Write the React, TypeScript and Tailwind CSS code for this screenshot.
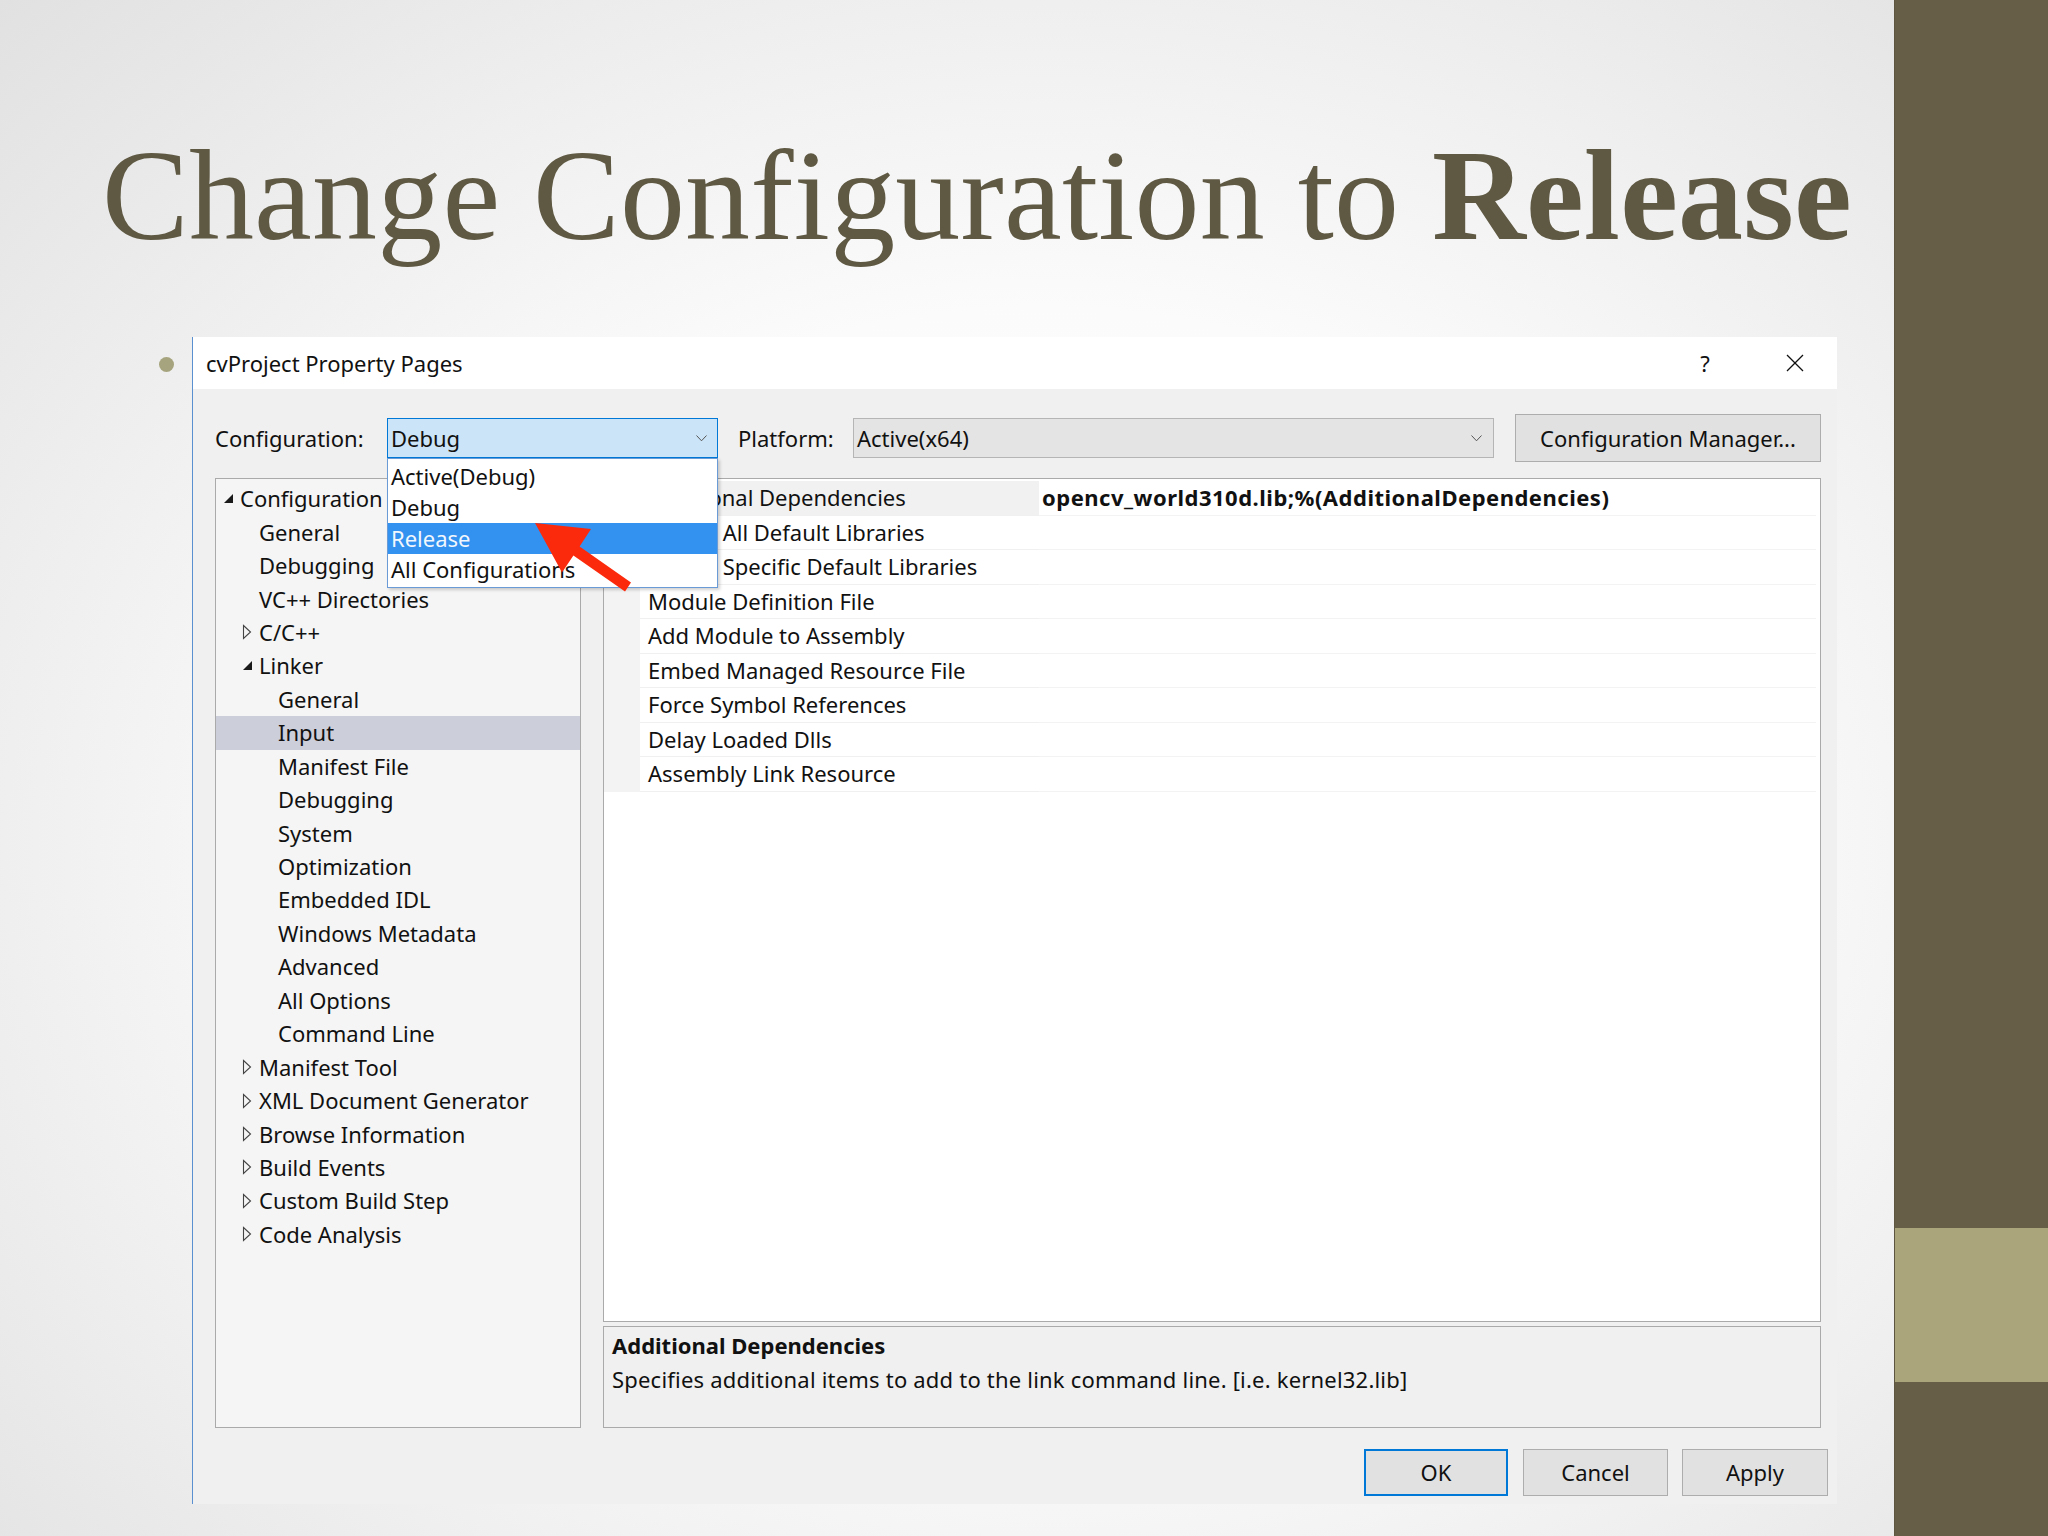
import React from "react";

type TreeItem = { label: string; level: 0 | 1 | 2; state?: "open" | "closed"; selected?: boolean };

const tree: TreeItem[] = [
  { label: "Configuration Properties", level: 0, state: "open" },
  { label: "General", level: 1 },
  { label: "Debugging", level: 1 },
  { label: "VC++ Directories", level: 1 },
  { label: "C/C++", level: 1, state: "closed" },
  { label: "Linker", level: 1, state: "open" },
  { label: "General", level: 2 },
  { label: "Input", level: 2, selected: true },
  { label: "Manifest File", level: 2 },
  { label: "Debugging", level: 2 },
  { label: "System", level: 2 },
  { label: "Optimization", level: 2 },
  { label: "Embedded IDL", level: 2 },
  { label: "Windows Metadata", level: 2 },
  { label: "Advanced", level: 2 },
  { label: "All Options", level: 2 },
  { label: "Command Line", level: 2 },
  { label: "Manifest Tool", level: 1, state: "closed" },
  { label: "XML Document Generator", level: 1, state: "closed" },
  { label: "Browse Information", level: 1, state: "closed" },
  { label: "Build Events", level: 1, state: "closed" },
  { label: "Custom Build Step", level: 1, state: "closed" },
  { label: "Code Analysis", level: 1, state: "closed" },
];

const levelPad: Record<number, string> = {
  0: "pl-[7px]",
  1: "pl-[26px]",
  2: "pl-[45px]",
};

const props = [
  "Additional Dependencies",
  "Ignore All Default Libraries",
  "Ignore Specific Default Libraries",
  "Module Definition File",
  "Add Module to Assembly",
  "Embed Managed Resource File",
  "Force Symbol References",
  "Delay Loaded Dlls",
  "Assembly Link Resource",
];

function Chevron() {
  return (
    <svg width="11" height="7" viewBox="0 0 11 7">
      <polyline points="0.5,0.5 5.5,5.8 10.5,0.5" fill="none" stroke="#555" strokeWidth="1" />
    </svg>
  );
}

function OpenTri() {
  return (
    <svg width="11" height="11" viewBox="0 0 11 11">
      <polygon points="10,1 10,10 1,10" fill="#1a1a1a" />
    </svg>
  );
}

function ClosedTri() {
  return (
    <svg width="10" height="16" viewBox="0 0 10 16">
      <polygon points="1.5,1.5 8.5,8 1.5,14.5" fill="none" stroke="#444" strokeWidth="1.1" />
    </svg>
  );
}

export default function App() {
  return (
    <div className="relative w-[2048px] h-[1536px] overflow-hidden flex">
      {/* slide area */}
      <div className="w-[1894px] h-full flex flex-col bg-[radial-gradient(ellipse_at_55%_55%,#ffffff_0%,#fbfbfb_45%,#e1e1e1_100%)]">
        <div className="h-[337px] pl-[102px] pt-[130px]">
          <div className="font-['Liberation_Serif',serif] text-[130px] leading-[130px] text-[#5f5943] whitespace-nowrap tracking-[0.2px]">
            Change Configuration to <span className="font-bold">Release</span>
          </div>
        </div>

        <div className="flex items-start ml-[159px]">
          <div className="w-[15px] h-[15px] mt-[20px] mr-[18px] rounded-full bg-[#a6a47e]" />

          {/* dialog */}
          <div className="w-[1645px] border-l border-[#5a8fd0] font-['Noto_Sans',sans-serif] text-[22px] text-[#111]">
            <div className="h-[52px] bg-white flex items-center pl-[13px] pr-[33px]">
              <span>cvProject Property Pages</span>
              <div className="ml-auto flex items-center">
                <span className="w-[20px] text-center">?</span>
                <svg className="ml-[71px]" width="18" height="18" viewBox="0 0 18 18">
                  <line x1="1" y1="1" x2="17" y2="17" stroke="#111" strokeWidth="1.3" />
                  <line x1="17" y1="1" x2="1" y2="17" stroke="#111" strokeWidth="1.3" />
                </svg>
              </div>
            </div>

            <div className="h-[1115px] bg-[#f0f0f0] flex flex-col">
              {/* config row */}
              <div className="pt-[25px] pl-[22px] flex items-center h-[73px]">
                <div className="w-[172px]">Configuration:</div>
                <div className="relative w-[331px] h-[40px] border border-[#0078d7] bg-[#cce4f7] flex items-center justify-between pl-[3px] pr-[10px]">
                  <span>Debug</span>
                  <Chevron />
                  <div className="absolute left-[-1px] top-[39px] w-[331px] border border-[#6b9bd6] bg-white py-[2px] shadow-[2px_2px_3px_rgba(0,0,0,0.18)] z-10">
                    <div className="h-[31px] leading-[31px] pl-[3px]">Active(Debug)</div>
                    <div className="h-[31px] leading-[31px] pl-[3px]">Debug</div>
                    <div className="h-[31px] leading-[31px] pl-[3px] bg-[#3391ef] text-[#f2f7fd]">Release</div>
                    <div className="h-[31px] leading-[31px] pl-[3px]">All Configurations</div>
                  </div>
                </div>
                <div className="ml-[20px] w-[115px]">Platform:</div>
                <div className="w-[641px] h-[40px] border border-[#b5b5b5] bg-[#e4e4e4] flex items-center justify-between pl-[3px] pr-[11px]">
                  <span>Active(x64)</span>
                  <Chevron />
                </div>
                <div className="ml-[21px] w-[306px] h-[48px] border border-[#adadad] bg-[#e1e1e1] flex items-center justify-center">
                  Configuration Manager...
                </div>
              </div>

              {/* main area */}
              <div className="mt-[16px] pl-[22px] flex h-[950px]">
                <div className="w-[366px] h-[950px] border border-[#aaaaaa] bg-[#f5f5f5] pt-[3px] overflow-hidden">
                  {tree.map((t, i) => (
                    <div
                      key={i}
                      className={`flex items-center h-[33.45px] whitespace-nowrap ${levelPad[t.level]} ${t.selected ? "bg-[#ccced9]" : ""}`}
                    >
                      <div className="w-[17px] flex items-center">
                        {t.state === "open" ? <OpenTri /> : t.state === "closed" ? <ClosedTri /> : null}
                      </div>
                      <span>{t.label}</span>
                    </div>
                  ))}
                </div>

                <div className="ml-[22px] w-[1218px] flex flex-col">
                  <div className="h-[844px] border border-[#aaaaaa] bg-white pt-[2px] pr-[4px]">
                    {props.map((p, i) => (
                      <div key={i} className="flex h-[34.5px]">
                        <div className="w-[36px] bg-[#f3f3f3]" />
                        <div
                          className={`w-[399px] pl-[8px] flex items-center whitespace-nowrap border-b border-[#f0f0f0] ${i === 0 ? "bg-[#f1f1f1]" : ""}`}
                        >
                          {p}
                        </div>
                        <div className="flex-1 pl-[3px] flex items-center whitespace-nowrap border-b border-[#f3f3f3] font-bold tracking-[0.5px]">
                          {i === 0 ? "opencv_world310d.lib;%(AdditionalDependencies)" : ""}
                        </div>
                      </div>
                    ))}
                  </div>
                  <div className="mt-[4px] h-[102px] border border-[#aaaaaa] bg-[#f0f0f0] pl-[8px] pt-[1px] leading-[34px]">
                    <div className="font-bold">Additional Dependencies</div>
                    <div className="tracking-[0.2px]">Specifies additional items to add to the link command line. [i.e. kernel32.lib]</div>
                  </div>
                </div>
              </div>

              {/* buttons */}
              <div className="mt-[21px] flex justify-end pr-[9px]">
                <div className="w-[144px] h-[47px] border-2 border-[#0078d7] bg-[#e1e1e1] flex items-center justify-center">OK</div>
                <div className="ml-[15px] w-[145px] h-[47px] border border-[#adadad] bg-[#e1e1e1] flex items-center justify-center">Cancel</div>
                <div className="ml-[14px] w-[146px] h-[47px] border border-[#adadad] bg-[#e1e1e1] flex items-center justify-center">Apply</div>
              </div>
            </div>
          </div>
        </div>
      </div>

      {/* right decorative bar */}
      <div className="w-[154px] h-full flex flex-col border-l border-[#5d553f]">
        <div className="h-[1228px] bg-[#675e47]" />
        <div className="h-[154px] bg-[#aaa57a]" />
        <div className="flex-1 bg-[#675e47]" />
      </div>

      {/* red annotation arrow */}
      <svg className="absolute left-0 top-0 pointer-events-none z-20" width="2048" height="1536" viewBox="0 0 2048 1536">
        <polygon
          points="535,523 591,529 579.6,546.4 631,582.4 625,591.6 573.4,555.6 562,572.6"
          fill="#fb2a0c"
        />
      </svg>
    </div>
  );
}
